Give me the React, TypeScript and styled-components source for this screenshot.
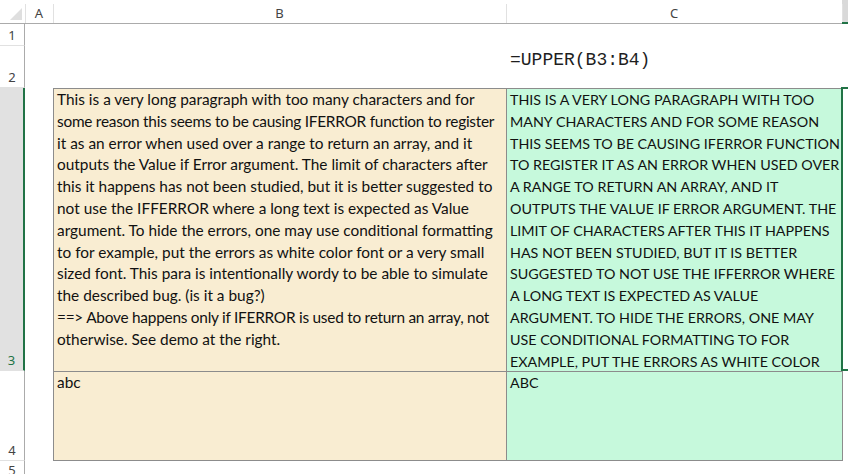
import React from 'react';
import styled, { createGlobalStyle } from 'styled-components';

const GlobalStyle = createGlobalStyle`
  html, body {
    margin: 0;
    padding: 0;
    background: #ffffff;
  }
  body {
    width: 848px;
    height: 474px;
    overflow: hidden;
  }
`

// wrapped the way the sheet wraps it; tight = line that runs wider than Calibri would
const longText: { text: string; tight?: boolean }[] = [
    { text: 'This is a very long paragraph with too many characters and for' },
    { text: 'some reason this seems to be causing IFERROR function to register', tight: true },
    { text: 'it as an error when used over a range to return an array, and it' },
    { text: 'outputs the Value if Error argument. The limit of characters after' },
    { text: 'this it happens has not been studied, but it is better suggested to' },
    { text: 'not use the IFFERROR where a long text is expected as Value' },
    { text: 'argument. To hide the errors, one may use conditional formatting' },
    { text: 'to for example, put the errors as white color font or a very small' },
    { text: 'sized font. This para is intentionally wordy to be able to simulate' },
    { text: 'the described bug. (is it a bug?)' },
    { text: '==> Above happens only if IFERROR is used to return an array, not', tight: true },
    { text: 'otherwise. See demo at the right.' },
]

const upperText = [
    'THIS IS A VERY LONG PARAGRAPH WITH TOO',
    'MANY CHARACTERS AND FOR SOME REASON',
    'THIS SEEMS TO BE CAUSING IFERROR FUNCTION',
    'TO REGISTER IT AS AN ERROR WHEN USED OVER',
    'A RANGE TO RETURN AN ARRAY, AND IT',
    'OUTPUTS THE VALUE IF ERROR ARGUMENT. THE',
    'LIMIT OF CHARACTERS AFTER THIS IT HAPPENS',
    'HAS NOT BEEN STUDIED, BUT IT IS BETTER',
    'SUGGESTED TO NOT USE THE IFFERROR WHERE',
    'A LONG TEXT IS EXPECTED AS VALUE',
    'ARGUMENT. TO HIDE THE ERRORS, ONE MAY',
    'USE CONDITIONAL FORMATTING TO FOR',
    'EXAMPLE, PUT THE ERRORS AS WHITE COLOR',
]

const columns = ['A', 'B', 'C', '']

const App: React.FC = () => {
    return (
        <>
            <GlobalStyle />
            <Sheet>
                <Corner>
                    <svg width="12" height="12" viewBox="0 0 12 12">
                        <polygon points="12,0 12,12 0,12" fill="#dfdfdf" />
                    </svg>
                </Corner>
                {columns.map((c, i) => (
                    <ColHead key={i} $selected={i === 3}>{c}</ColHead>
                ))}

                <RowHead>1</RowHead>
                <Blank /><Blank /><Blank /><Blank />

                <RowHead>2</RowHead>
                <Blank /><Blank />
                <FormulaCell>=UPPER(B3:B4)</FormulaCell>
                <Blank />

                <RowHead $selected>3</RowHead>
                <Blank />
                <DataBlock>
                    <DataCell $tone="beige">
                        {longText.map((l, i) => <Line key={i} $tight={l.tight}>{l.text}</Line>)}
                    </DataCell>
                    <DataCell $tone="green" $caps>
                        {upperText.map((l, i) => <Line key={i}>{l}</Line>)}
                    </DataCell>
                    <DataCell $tone="beige"><Line>abc</Line></DataCell>
                    <DataCell $tone="green" $caps><Line>ABC</Line></DataCell>
                </DataBlock>
                <ActiveCell />

                <RowHead>4</RowHead>
                <Blank /><Blank />

                <RowHead>5</RowHead>
                <Blank /><Blank /><Blank /><Blank />
            </Sheet>
        </>
    )
}
export default App

const green = '#217346'

const Sheet = styled.div`
    display: grid;
    grid-template-columns: 25px 28px 453px 336px 1fr;
    grid-template-rows: 24px 22px 42px 283px 90px 20px;
    width: 848px;
    height: 474px;
    overflow: hidden;
    background: #ffffff;
    font-family: 'Segoe UI', 'Noto Sans', 'Open Sans', sans-serif;
`
const Corner = styled.div`
    display: flex;
    align-items: flex-end;
    justify-content: flex-end;
    padding: 0 3px 3px 0;
    border-bottom: 1px solid #ababab;
    box-sizing: border-box;
`
const ColHead = styled.div<{ $selected?: boolean }>`
    display: flex;
    align-items: center;
    justify-content: center;
    padding-top: 2px;
    box-sizing: border-box;
    font-size: 13px;
    color: #444444;
    background:
        linear-gradient(#e1e1e1, #e1e1e1) left 4px / 1px calc(100% - 4px) no-repeat,
        ${(p) => (p.$selected ? '#d9d9d9' : '#ffffff')};
    border-bottom: ${(p) => (p.$selected ? `2px solid ${green}` : '1px solid #ababab')};
`
const RowHead = styled.div<{ $selected?: boolean }>`
    display: flex;
    align-items: flex-end;
    justify-content: center;
    padding-bottom: 3px;
    box-sizing: border-box;
    font-size: 13px;
    line-height: 1;
    color: ${(p) => (p.$selected ? green : '#444444')};
    background: ${(p) => (p.$selected ? '#e1e1e1' : '#ffffff')};
    border-bottom: 1px solid #e1e1e1;
    border-right: ${(p) => (p.$selected ? `2px solid ${green}` : '1px solid #ababab')};
`
const Blank = styled.div``

const FormulaCell = styled.div`
    align-self: end;
    padding: 0 0 18px 4px;
    font-family: 'Liberation Mono', 'DejaVu Sans Mono', monospace;
    font-size: 18px;
    line-height: 20px;
    color: #1e1e1e;
    white-space: nowrap;
`
const DataBlock = styled.div`
    grid-column: 3 / span 2;
    grid-row: 4 / span 2;
    display: grid;
    grid-template-columns: 452px 335px;
    grid-template-rows: 282px 88px;
    gap: 1px;
    padding: 1px;
    width: 790px;
    height: 373px;
    box-sizing: border-box;
    background: #8c8c8c;
`
const DataCell = styled.div<{ $tone: 'beige' | 'green'; $caps?: boolean }>`
    background: ${(p) => (p.$tone === 'beige' ? '#f9edd2' : '#c6f9dc')};
    padding: 0 3px;
    overflow: hidden;
    font-family: 'Lato', 'Open Sans', sans-serif;
    font-size: ${(p) => (p.$caps ? '14.3px' : '15.4px')};
    line-height: 21.8px;
    color: #111111;
`
const Line = styled.div<{ $tight?: boolean }>`
    white-space: nowrap;
    letter-spacing: ${(p) => (p.$tight ? '-0.25px' : 'normal')};
`
const ActiveCell = styled.div`
    position: relative;
    z-index: 1;
    margin: -1px 0 0 -1px;
    border-left: 2px solid ${green};
    border-top: 2px solid ${green};
    border-bottom: 2px solid ${green};
`
